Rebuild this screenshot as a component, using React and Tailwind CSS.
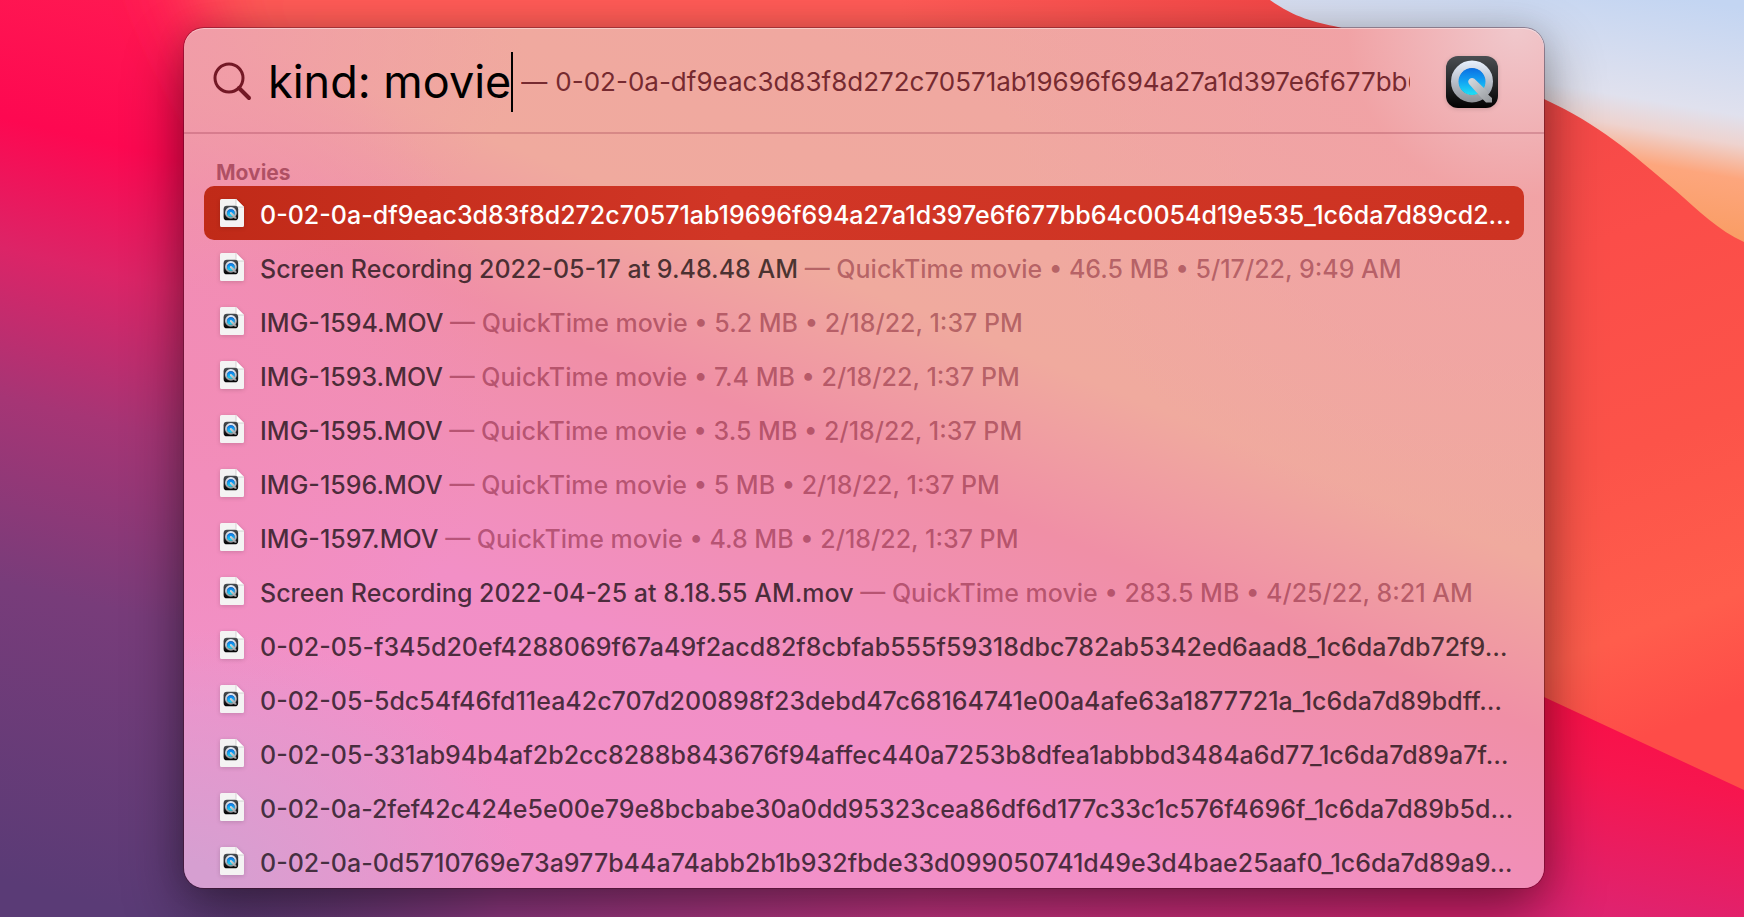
import { useState } from 'react';

const RESULTS = [
    { id: 1, name: '0-02-0a-df9eac3d83f8d272c70571ab19696f694a27a1d397e6f677bb64c0054d19e535_1c6da7d89cd2…' },
    { id: 2, name: 'Screen Recording 2022-05-17 at 9.48.48 AM', info: 'QuickTime movie • 46.5 MB • 5/17/22, 9:49 AM' },
    { id: 3, name: 'IMG-1594.MOV', info: 'QuickTime movie • 5.2 MB • 2/18/22, 1:37 PM' },
    { id: 4, name: 'IMG-1593.MOV', info: 'QuickTime movie • 7.4 MB • 2/18/22, 1:37 PM' },
    { id: 5, name: 'IMG-1595.MOV', info: 'QuickTime movie • 3.5 MB • 2/18/22, 1:37 PM' },
    { id: 6, name: 'IMG-1596.MOV', info: 'QuickTime movie • 5 MB • 2/18/22, 1:37 PM' },
    { id: 7, name: 'IMG-1597.MOV', info: 'QuickTime movie • 4.8 MB • 2/18/22, 1:37 PM' },
    { id: 8, name: 'Screen Recording 2022-04-25 at 8.18.55 AM.mov', info: 'QuickTime movie • 283.5 MB • 4/25/22, 8:21 AM' },
    { id: 9, name: '0-02-05-f345d20ef4288069f67a49f2acd82f8cbfab555f59318dbc782ab5342ed6aad8_1c6da7db72f9…' },
    { id: 10, name: '0-02-05-5dc54f46fd11ea42c707d200898f23debd47c68164741e00a4afe63a1877721a_1c6da7d89bdff…' },
    { id: 11, name: '0-02-05-331ab94b4af2b2cc8288b843676f94affec440a7253b8dfea1abbbd3484a6d77_1c6da7d89a7f…' },
    { id: 12, name: '0-02-0a-2fef42c424e5e00e79e8bcbabe30a0dd95323cea86df6d177c33c1c576f4696f_1c6da7d89b5d…' },
    { id: 13, name: '0-02-0a-0d5710769e73a977b44a74abb2b1b932fbde33d099050741d49e3d4bae25aaf0_1c6da7d89a9…' },
];

function Wallpaper() {
    return (
        <svg className="absolute inset-0 w-full h-full" viewBox="0 0 1744 917" preserveAspectRatio="none" aria-hidden="true">
            <defs>
                <linearGradient id="dusk" gradientUnits="userSpaceOnUse" x1="210" y1="0" x2="0" y2="880">
                    <stop offset="0" stopColor="#ff1a52" />
                    <stop offset="0.18" stopColor="#fd0851" />
                    <stop offset="0.32" stopColor="#dc2467" />
                    <stop offset="0.48" stopColor="#a63575" />
                    <stop offset="0.68" stopColor="#783c7a" />
                    <stop offset="1" stopColor="#5a3b76" />
                </linearGradient>
                <linearGradient id="band" gradientUnits="userSpaceOnUse" x1="1500" y1="60" x2="1744" y2="700">
                    <stop offset="0" stopColor="#f24747" />
                    <stop offset="0.3" stopColor="#fb4d49" />
                    <stop offset="0.6" stopColor="#fc5349" />
                    <stop offset="0.85" stopColor="#ff5d4c" />
                    <stop offset="1" stopColor="#fe4c48" />
                </linearGradient>
                <linearGradient id="ridge" gradientUnits="userSpaceOnUse" x1="900" y1="0" x2="1300" y2="0">
                    <stop offset="0" stopColor="#f24747" stopOpacity="0" />
                    <stop offset="1" stopColor="#f24747" />
                </linearGradient>
                <linearGradient id="sky" gradientUnits="userSpaceOnUse" x1="1700" y1="0" x2="1660" y2="240">
                    <stop offset="0" stopColor="#c3d5f2" />
                    <stop offset="0.44" stopColor="#e0e1ee" />
                    <stop offset="0.56" stopColor="#eed3cf" />
                    <stop offset="0.7" stopColor="#fda67d" />
                    <stop offset="1" stopColor="#f99b5f" />
                </linearGradient>
                <linearGradient id="fold" gradientUnits="userSpaceOnUse" x1="1600" y1="690" x2="1560" y2="917">
                    <stop offset="0" stopColor="#fb0e46" />
                    <stop offset="0.35" stopColor="#f6164f" />
                    <stop offset="1" stopColor="#dd2472" />
                </linearGradient>
                <linearGradient id="floor" x1="0" y1="0" x2="1" y2="0">
                    <stop offset="0" stopColor="#5a3b76" stopOpacity="0" />
                    <stop offset="0.25" stopColor="#953a86" />
                    <stop offset="0.55" stopColor="#c83584" />
                    <stop offset="1" stopColor="#dd2472" />
                </linearGradient>
                <filter id="soft" x="-50%" y="-50%" width="200%" height="200%">
                    <feGaussianBlur stdDeviation="38" />
                </filter>
            </defs>
            <rect width="1744" height="917" fill="url(#dusk)" />
            <path d="M170 -80 L1500 -80 L1500 300 L420 300 Q230 130 170 -80Z" fill="#ff5c56" filter="url(#soft)" />
            <rect x="150" y="780" width="1400" height="137" fill="url(#floor)" />
            <rect x="900" y="0" width="600" height="300" fill="url(#ridge)" />
            <path d="M1400 0 H1744 V917 H1450Z" fill="url(#band)" />
            <path d="M1270 0 C1295 18 1315 22 1338 27 C1420 50 1490 70 1544 99 C1600 125 1630 152 1675 190 C1700 212 1718 230 1744 242 V0Z" fill="url(#sky)" />
            <path d="M1400 610 L1544 697 L1744 790 V917 H1400Z" fill="url(#fold)" />
        </svg>
    );
}

function SearchIcon() {
    return (
        <svg className="w-10 h-10 shrink-0" viewBox="0 0 40 40" fill="none" stroke="#731825" aria-hidden="true">
            <circle cx="17" cy="16" r="14" strokeWidth="3" />
            <path d="M27 26 L37 36" strokeWidth="4" strokeLinecap="round" />
        </svg>
    );
}

function QuickTimeGlyph() {
    return (
        <>
            <rect width="52" height="52" rx="12" fill="url(#qt-tile)" />
            <circle cx="26" cy="25.5" r="17" fill="none" stroke="url(#qt-ring)" strokeWidth="8" />
            <circle cx="26" cy="25.5" r="13.5" fill="url(#qt-lens)" />
            <path d="M23 28 A3.8 3.8 0 0 1 28.4 22.8 L42 36 V38.5 L46 42 V46.5 H40 L36.5 43 Z" fill="url(#qt-tail)" />
        </>
    );
}

function QuickTimeIcon() {
    return (
        <svg className="w-[52px] h-[52px] shrink-0 drop-shadow-sm" viewBox="0 0 52 52" role="img" aria-label="QuickTime Player">
            <defs>
                <linearGradient id="qt-tile" x1="0" y1="0" x2="0" y2="1">
                    <stop offset="0" stopColor="#4a4e52" />
                    <stop offset="1" stopColor="#020202" />
                </linearGradient>
                <linearGradient id="qt-ring" gradientUnits="userSpaceOnUse" x1="26" y1="4" x2="26" y2="47">
                    <stop offset="0" stopColor="#e9f2ff" />
                    <stop offset="0.5" stopColor="#b9bfca" />
                    <stop offset="1" stopColor="#8c8f94" />
                </linearGradient>
                <linearGradient id="qt-lens" x1="0" y1="0" x2="0" y2="1">
                    <stop offset="0" stopColor="#0b6fe2" />
                    <stop offset="0.5" stopColor="#12a3f3" />
                    <stop offset="1" stopColor="#1fe0f5" />
                </linearGradient>
                <linearGradient id="qt-tail" gradientUnits="userSpaceOnUse" x1="24" y1="22" x2="44" y2="46">
                    <stop offset="0" stopColor="#d5dbe0" />
                    <stop offset="1" stopColor="#96999d" />
                </linearGradient>
            </defs>
            <QuickTimeGlyph />
        </svg>
    );
}

function MovieFileIcon() {
    return (
        <svg className="w-6 h-7 shrink-0 drop-shadow-sm" viewBox="0 0 24 28" aria-hidden="true">
            <path d="M1.5 0 H16 L24 8 V26.5 A1.5 1.5 0 0 1 22.5 28 H1.5 A1.5 1.5 0 0 1 0 26.5 V1.5 A1.5 1.5 0 0 1 1.5 0Z" fill="#f4f3f3" />
            <path d="M16 0 L24 8 H16Z" fill="#ffffff" />
            <path d="M16 0 V8 H24" fill="none" stroke="#c9c6c8" strokeWidth="0.8" />
            <g transform="translate(3.6 6.8) scale(0.28)">
                <QuickTimeGlyph />
            </g>
        </svg>
    );
}

function ResultRow({ result, selected, onSelect }) {
    return (
        <li>
            <button
                type="button"
                onClick={() => onSelect(result.id)}
                className={`flex items-center gap-4 w-full h-[54px] px-4 rounded-[10px] text-left text-[25px] leading-8 font-medium whitespace-nowrap ${selected ? 'bg-gradient-to-r from-[#c02a18] via-[#d13626] via-40% to-[#cd3322] text-white' : 'text-black/70'}`}
            >
                <MovieFileIcon />
                <span className="pt-1">
                    {result.name}
                    {result.info && <span className="text-[#6e0a1e]/45"> — {result.info}</span>}
                </span>
            </button>
        </li>
    );
}

export default function App() {
    const [query, setQuery] = useState('kind: movie');
    const [selectedId, setSelectedId] = useState(1);

    return (
        <div className="relative min-h-screen overflow-hidden pt-7 pb-[29px] pl-[184px] pr-[200px] font-['Inter',sans-serif]">
            <Wallpaper />

            <main className="relative rounded-[20px] shadow-[0_0_0_1px_rgba(60,0,20,0.35),0_24px_60px_rgba(0,0,0,0.45),0_0_30px_rgba(0,0,0,0.12)]">
                <div className="rounded-[20px] overflow-hidden bg-[radial-gradient(circle_at_98%_0%,#f0c8cc_0px,#f1a2a6cc_170px,#f1a2a600_520px),radial-gradient(ellipse_340px_260px_at_0%_0%,#f19ca8_0%,#f19ca800_100%),radial-gradient(ellipse_340px_260px_at_0%_100%,#d69fd1_10%,#d69fd100_100%),radial-gradient(ellipse_320px_340px_at_0%_40%,#f28cb6_0%,#f28cb600_100%),linear-gradient(202deg,#f1a3a4_0%,#f0a8a0_22%,#f0aa9e_38%,#f08fa6_50%,#f28fc6_70%,#f293cc_100%)] inset-shadow-[0_1px_0_rgba(255,255,255,0.4)]">
                    <header className="flex items-center h-[106px] pt-1 pl-7 pr-[46px] border-b-2 border-[#8c2840]/25">
                        <SearchIcon />
                        <label htmlFor="spotlight" className="sr-only">Spotlight Search</label>
                        <input
                            id="spotlight"
                            type="text"
                            value={query}
                            onChange={(e) => setQuery(e.target.value)}
                            className="field-sizing-content shrink-0 ml-4 bg-transparent text-[45px] leading-[60px] text-black outline-none"
                        />
                        <span className="w-[2px] h-[60px] shrink-0 bg-black" />
                        <p className="flex-1 min-w-0 ml-2 mr-9 overflow-hidden whitespace-nowrap text-[26px] leading-8 text-[#762a30]">
                            <span className="mr-2">—</span>
                            0-02-0a-df9eac3d83f8d272c70571ab19696f694a27a1d397e6f677bb64c0054d19e535
                        </p>
                        <QuickTimeIcon />
                    </header>

                    <section className="px-5 pt-6">
                        <h2 className="pl-3 pt-px text-[21px] leading-[27px] font-bold text-[#6e0a1e]/50">Movies</h2>
                        <ul>
                            {RESULTS.map((result) => (
                                <ResultRow
                                    key={result.id}
                                    result={result}
                                    selected={result.id === selectedId}
                                    onSelect={setSelectedId}
                                />
                            ))}
                        </ul>
                    </section>
                </div>
            </main>
        </div>
    );
}
